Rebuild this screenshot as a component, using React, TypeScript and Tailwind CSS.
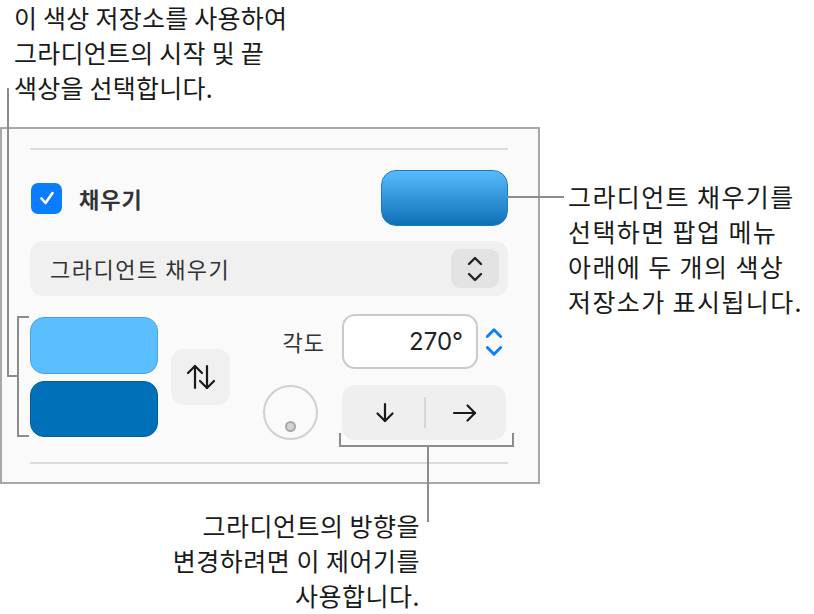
import React from "react";

const FONT = { fontFamily: '"Noto Sans CJK KR", Inter, "Noto Sans", sans-serif' };
const NUM = { fontFamily: 'Inter, "Noto Sans CJK KR", sans-serif' };

function Chevrons({ color = "#222", w = 18, h = 30, sw = 2.4 }: { color?: string; w?: number; h?: number; sw?: number }) {
  return (
    <svg width={w} height={h} viewBox="0 0 18 30" fill="none" stroke={color} strokeWidth={sw} strokeLinecap="round" strokeLinejoin="round">
      <path d="M3 10 L9 4 L15 10" />
      <path d="M3 20 L9 26 L15 20" />
    </svg>
  );
}

export default function App() {
  return (
    <div className="relative w-[814px] h-[614px] bg-white overflow-hidden text-[#1a1a1a]" style={FONT}>
      <div className="flex">
        {/* left column */}
        <div className="w-[540px] flex flex-col">
          <div className="pl-[14px] text-[25px] tracking-[0.25px] leading-[35px] text-[#1a1a1a]">
            <div>이 색상 저장소를 사용하여</div>
            <div>그라디언트의 시작 및 끝</div>
            <div>색상을 선택합니다.</div>
          </div>

          {/* panel */}
          <div className="mt-[22px] w-[540px] h-[357px] border-2 border-[#a8a8a8] bg-[#fafafa] pl-[28px] pr-[30px] pt-[19px]">
            <div className="h-[2px] bg-[#dcdcdc]" />

            {/* fill row */}
            <div className="mt-[20px] h-[56px] flex items-center justify-between">
              <div className="flex items-center">
                <div className="w-[31px] h-[31px] rounded-[7px] bg-[#0a7cff] flex items-center justify-center ml-[1px]">
                  <svg width="20" height="20" viewBox="0 0 20 20" fill="none" stroke="white" strokeWidth="2.6" strokeLinecap="round" strokeLinejoin="round">
                    <path d="M4.5 10.5 L8.5 15 L15.5 5" />
                  </svg>
                </div>
                <span className="ml-[17px] text-[22px] tracking-[1px] font-bold text-[#333]">채우기</span>
              </div>
              <div className="w-[127px] h-[56px] rounded-[15px] border border-[#1b7cc0] bg-gradient-to-b from-[#55bcfb] to-[#0a70b8]" />
            </div>

            {/* popup */}
            <div className="mt-[15px] h-[55px] rounded-[13px] bg-[#f0f0f0] flex items-center justify-between pl-[20px] pr-[9px]">
              <span className="text-[22px] tracking-[1.5px] text-[#333]">그라디언트 채우기</span>
              <div className="w-[48px] h-[39px] rounded-[9px] bg-[#e3e3e3] flex items-center justify-center">
                <Chevrons />
              </div>
            </div>

            {/* gradient controls */}
            <div className="mt-[18px] flex items-start">
              <div className="mt-[3px] flex flex-col gap-[7px]">
                <div className="w-[128px] h-[57px] rounded-[14px] bg-[#5bbefe] border border-[#49a4de]" />
                <div className="w-[128px] h-[56px] rounded-[14px] bg-[#0071b8] border border-[#005e9c]" />
              </div>
              <div className="ml-[13px] mt-[35px] w-[59px] h-[56px] rounded-[13px] bg-[#f0f0f0] flex items-center justify-center">
                <svg width="32" height="26" viewBox="0 0 32 26" fill="none" stroke="#1a1a1a" strokeWidth="2.2" strokeLinecap="round" strokeLinejoin="round">
                  <path d="M10 24 L10 2" />
                  <path d="M3 9 L10 2 L17 9" />
                  <path d="M22 2 L22 24" />
                  <path d="M15 17 L22 24 L29 17" />
                </svg>
              </div>
              <div className="ml-[33px] flex flex-col">
                <div className="h-[55px] flex items-center">
                  <span className="w-[62px] text-right text-[22px] tracking-[1px] text-[#333]">각도</span>
                  <div className="ml-[17px] w-[136px] h-[55px] rounded-[13px] border-2 border-[#cacaca] bg-white flex items-center justify-end pr-[13px]">
                    <span className="text-[24px] text-[#222]" style={NUM}>270°</span>
                  </div>
                  <div className="ml-[6px] w-[20px] h-[55px] flex items-center justify-center">
                    <Chevrons color="#0a7cff" w={20} h={34} sw={2.6} />
                  </div>
                </div>
                <div className="mt-[16px] flex items-center">
                  <div className="w-[55px] h-[55px] rounded-full border-2 border-[#d0d0d0] bg-[#fafafa] flex flex-col items-center justify-end pb-[6px]">
                    <div className="w-[11px] h-[11px] rounded-full bg-[#d4d4d4] border-2 border-[#a8a8a8]" />
                  </div>
                  <div className="ml-[24px] w-[164px] h-[55px] rounded-[13px] bg-[#efefef] flex items-center">
                    <div className="flex-1 flex items-center justify-center pl-[4px]">
                      <svg width="22" height="22" viewBox="0 0 22 22" fill="none" stroke="#1a1a1a" strokeWidth="2.2" strokeLinecap="round" strokeLinejoin="round">
                        <path d="M11 2 L11 19" />
                        <path d="M3.5 11.5 L11 19 L18.5 11.5" />
                      </svg>
                    </div>
                    <div className="w-[2px] h-[31px] bg-[#d6d6d6]" />
                    <div className="flex-1 flex items-center justify-center pr-[2px]">
                      <svg width="26" height="20" viewBox="0 0 26 20" fill="none" stroke="#1a1a1a" strokeWidth="2.2" strokeLinecap="round" strokeLinejoin="round">
                        <path d="M2 10 L23 10" />
                        <path d="M15.5 2.5 L23 10 L15.5 17.5" />
                      </svg>
                    </div>
                  </div>
                </div>
              </div>
            </div>

            <div className="mt-[22px] h-[2px] bg-[#dcdcdc]" />
          </div>

          <div className="mt-[24px] pr-[120px] text-right text-[25px] tracking-[0.5px] leading-[35px] text-[#1a1a1a]">
            <div>그라디언트의 방향을</div>
            <div>변경하려면 이 제어기를</div>
            <div>사용합니다.</div>
          </div>
        </div>

        {/* right column */}
        <div className="pl-[28px] pt-[179px] text-[25px] tracking-[1.4px] leading-[35px] text-[#1a1a1a] whitespace-nowrap">
          <div>그라디언트 채우기를</div>
          <div>선택하면 팝업 메뉴</div>
          <div>아래에 두 개의 색상</div>
          <div>저장소가 표시됩니다.</div>
        </div>
      </div>

      {/* callout leader lines */}
      <div className="absolute left-[7px] top-[88px] w-[2px] h-[289px] bg-[#8c8c8c]" />
      <div className="absolute left-[7px] top-[375px] w-[12px] h-[2px] bg-[#8c8c8c]" />
      <div className="absolute left-[17px] top-[316px] w-[2px] h-[121px] bg-[#8c8c8c]" />
      <div className="absolute left-[17px] top-[316px] w-[12px] h-[2px] bg-[#8c8c8c]" />
      <div className="absolute left-[17px] top-[435px] w-[12px] h-[2px] bg-[#8c8c8c]" />

      <div className="absolute left-[507px] top-[196px] w-[57px] h-[2px] bg-[#8c8c8c]" />

      <div className="absolute left-[339px] top-[433px] w-[2px] h-[14px] bg-[#8c8c8c]" />
      <div className="absolute left-[512px] top-[433px] w-[2px] h-[14px] bg-[#8c8c8c]" />
      <div className="absolute left-[339px] top-[445px] w-[175px] h-[2px] bg-[#8c8c8c]" />
      <div className="absolute left-[427px] top-[445px] w-[2px] h-[77px] bg-[#8c8c8c]" />
    </div>
  );
}
